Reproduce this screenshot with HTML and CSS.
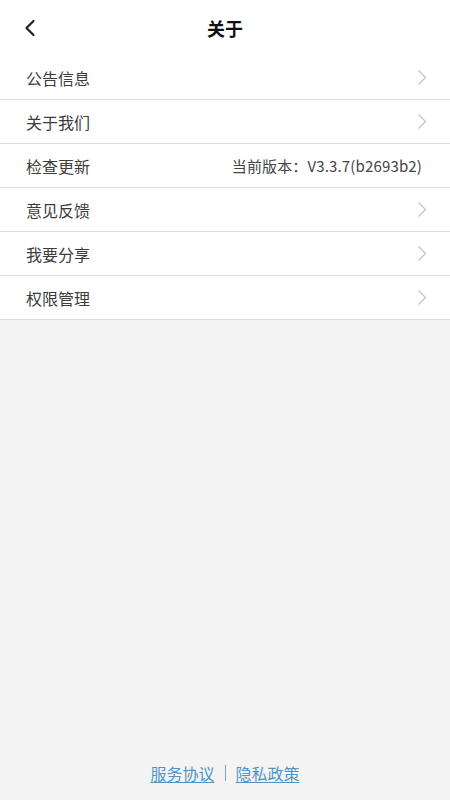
FILE: index.html
```html
<!DOCTYPE html>
<html lang="zh">
<head>
<meta charset="utf-8">
<link rel="stylesheet" href="styles.css">
</head>
<body>
<div class="page">
  <header class="topbar">
    <span class="back"><svg width="12" height="18" viewBox="0 0 12 18"><path d="M9.5 2 L2.5 9 L9.5 16" fill="none" stroke="#222" stroke-width="2.2" stroke-linecap="round" stroke-linejoin="round"/></svg></span>
    <h1 class="title">关于</h1>
  </header>
  <ul class="list">
    <li class="row"><span class="label">公告信息</span><span class="chev"><svg width="10" height="17" viewBox="0 0 10 17"><path d="M1.5 1.5 L8.5 8.5 L1.5 15.5" fill="none" stroke="#c4c4c4" stroke-width="1.3"/></svg></span></li>
    <li class="row"><span class="label">关于我们</span><span class="chev"><svg width="10" height="17" viewBox="0 0 10 17"><path d="M1.5 1.5 L8.5 8.5 L1.5 15.5" fill="none" stroke="#c4c4c4" stroke-width="1.3"/></svg></span></li>
    <li class="row"><span class="label">检查更新</span><span class="value">当前版本：V3.3.7(b2693b2)</span></li>
    <li class="row"><span class="label">意见反馈</span><span class="chev"><svg width="10" height="17" viewBox="0 0 10 17"><path d="M1.5 1.5 L8.5 8.5 L1.5 15.5" fill="none" stroke="#c4c4c4" stroke-width="1.3"/></svg></span></li>
    <li class="row"><span class="label">我要分享</span><span class="chev"><svg width="10" height="17" viewBox="0 0 10 17"><path d="M1.5 1.5 L8.5 8.5 L1.5 15.5" fill="none" stroke="#c4c4c4" stroke-width="1.3"/></svg></span></li>
    <li class="row"><span class="label">权限管理</span><span class="chev"><svg width="10" height="17" viewBox="0 0 10 17"><path d="M1.5 1.5 L8.5 8.5 L1.5 15.5" fill="none" stroke="#c4c4c4" stroke-width="1.3"/></svg></span></li>
  </ul>
  <div class="spacer"></div>
  <footer class="footer">
    <a class="link">服务协议</a><span class="sep"></span><a class="link">隐私政策</a>
  </footer>
</div>
</body>
</html>
```
FILE: styles.css
```css
* { box-sizing: border-box; }
html, body { margin: 0; padding: 0; }
body {
  font-family: "Noto Sans CJK SC", "Noto Sans", sans-serif;
  background: #f4f4f4;
  color: #333;
}
.page {
  width: 450px;
  height: 800px;
  display: flex;
  flex-direction: column;
}
.topbar {
  height: 56px;
  background: #fff;
  display: flex;
  align-items: center;
  justify-content: center;
  position: relative;
}
.back {
  position: absolute;
  left: 24px;
  top: 19px;
  width: 12px;
  height: 18px;
  display: flex;
}
.title {
  margin: 0;
  font-size: 18px;
  font-weight: 700;
  color: #111;
  line-height: 1;
}
.list {
  list-style: none;
  margin: 0;
  padding: 0;
  background: #fff;
}
.row {
  height: 44px;
  border-bottom: 1px solid #dcdcdc;
  display: flex;
  align-items: center;
  justify-content: space-between;
  padding: 0 22px 0 26px;
}
.label {
  font-size: 16px;
  color: #3c3c3c;
}
.value {
  font-size: 15px;
  color: #444;
  margin-right: 6px;
  letter-spacing: 0.15px;
}
.chev {
  display: flex;
  margin-right: 1px;
}
.spacer { flex: 1; }
.footer {
  height: 52px;
  display: flex;
  align-items: flex-start;
  justify-content: center;
  padding-top: 13px;
  font-size: 16px;
}
.link {
  color: #4f94c6;
  text-decoration: underline;
  text-underline-offset: 2px;
}
.sep {
  width: 1px;
  height: 16px;
  margin: 4px 10px 0;
  background: #6fa7cf;
}
```
